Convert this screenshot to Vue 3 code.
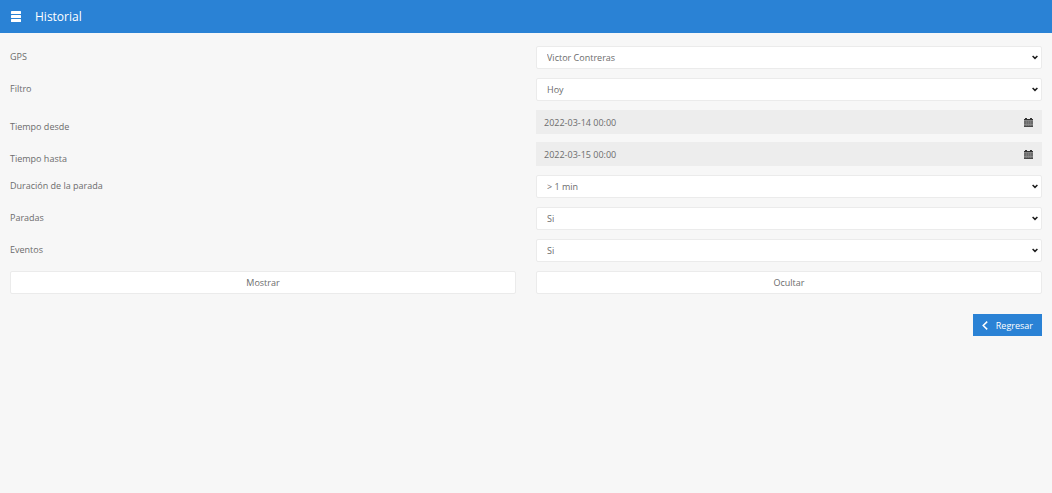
<script setup>
import { reactive } from 'vue'

const form = reactive({
  gps: 'Victor Contreras',
  filter: 'Hoy',
  from: '2022-03-14 00:00',
  to: '2022-03-15 00:00',
  duration: '> 1 min',
  stops: 'Si',
  events: 'Si'
})

const groups = [
  [
    { id: 'gps', label: 'GPS', options: ['Victor Contreras'] },
    { id: 'filter', label: 'Filtro', options: ['Hoy', 'Ayer'] }
  ],
  [
    { id: 'from', label: 'Tiempo desde', date: true },
    { id: 'to', label: 'Tiempo hasta', date: true }
  ],
  [
    { id: 'duration', label: 'Duración de la parada', options: ['> 1 min', '> 5 min'] },
    { id: 'stops', label: 'Paradas', options: ['Si', 'No'] },
    { id: 'events', label: 'Eventos', options: ['Si', 'No'] }
  ]
]
</script>

<template>
  <header class="bar">
    <button class="menu" type="button" aria-label="Menú">
      <svg width="10" height="11" viewBox="0 0 10 11" fill="#fff">
        <rect width="10" height="3" rx="0.5" />
        <rect y="4" width="10" height="3" rx="0.5" />
        <rect y="8" width="10" height="3" rx="0.5" />
      </svg>
    </button>
    <h1>Historial</h1>
  </header>
  <main>
    <form @submit.prevent>
      <div v-for="(group, i) in groups" :key="i" class="group">
        <div v-for="f in group" :key="f.id" class="row">
          <label :for="f.id" :class="{ low: f.date }">{{ f.label }}</label>
          <div v-if="f.date" class="date">
            <input :id="f.id" v-model="form[f.id]" type="text" readonly />
            <svg width="9" height="9" viewBox="0 0 9 9" aria-hidden="true">
              <path d="M0 1h1V0h2v1h3V0h2v1h1v8H0z" fill="#6c6c6c" />
              <path d="M0 1h1V0h2v1h3V0h2v1h1v1H0z" fill="#333" />
              <path d="M0 2.5h9M0 6.5h9" stroke="#999" stroke-width="0.6" />
              <path d="M2.5 3v5M4.5 3v5M6.5 3v5" stroke="#8c8c8c" stroke-width="0.5" />
              <path d="M0 8.5h9" stroke="#484848" />
            </svg>
          </div>
          <div v-else class="pick">
            <select :id="f.id" v-model="form[f.id]">
              <option v-for="o in f.options" :key="o">{{ o }}</option>
            </select>
            <svg width="6" height="5" viewBox="0 0 6 5" aria-hidden="true">
              <path d="M0.6 1L3 3.4L5.4 1" fill="none" stroke="#1c1c1c" stroke-width="1.5" />
            </svg>
          </div>
        </div>
      </div>
      <div class="row">
        <button class="plain" type="button">Mostrar</button>
        <button class="plain" type="button">Ocultar</button>
      </div>
    </form>
    <div class="footer">
      <button class="back" type="button">
        <svg width="6" height="9" viewBox="0 0 6 9" aria-hidden="true">
          <path d="M5.2 0.6L1.2 4.5L5.2 8.4" fill="none" stroke="#fff" stroke-width="1.5" />
        </svg>
        Regresar
      </button>
    </div>
  </main>
</template>

<style>
body {
  background: #f7f7f7;
}
</style>

<style scoped>
.bar,
main,
button,
input,
select {
  box-sizing: border-box;
  font-family: "Open Sans", "Noto Sans", sans-serif;
  font-size: 9px;
  color: #6c6c6c;
}
.bar {
  display: flex;
  align-items: center;
  gap: 14px;
  height: 33px;
  padding: 0 11px;
  background: #2a82d5;
}
.menu {
  display: flex;
  padding: 0;
  border: 0;
  background: none;
}
h1 {
  margin: 0;
  font-size: 12px;
  font-weight: 400;
  line-height: 32px;
  color: #fff;
}
main {
  padding: 13px 10px;
}
form {
  display: grid;
  gap: 9px;
}
.group {
  display: grid;
  gap: 9px;
}
.group:nth-child(2) {
  padding-bottom: 1px;
}
.row {
  display: grid;
  grid-template-columns: 1fr 1fr;
  column-gap: 20px;
  height: 23px;
}
label {
  line-height: 22px;
}
label.low {
  padding-top: 10px;
  line-height: 14px;
}
select,
.plain {
  width: 100%;
  height: 23px;
  border: 1px solid #ebebeb;
  border-radius: 2px;
  background: #fff;
}
.pick {
  position: relative;
}
.pick svg {
  position: absolute;
  top: 9px;
  right: 4px;
  pointer-events: none;
}
select {
  appearance: none;
  padding: 0 16px 0 10px;
}
.plain {
  padding: 0;
}
.date {
  display: flex;
  align-items: center;
  padding-right: 9px;
  background: #ededed;
}
.date input {
  flex: 1;
  min-width: 0;
  height: 23px;
  padding: 0 8px;
  border: 0;
  background: none;
}
.footer {
  display: flex;
  justify-content: flex-end;
  padding-top: 20px;
}
.back {
  display: flex;
  align-items: center;
  gap: 8px;
  height: 22px;
  padding: 0 9px;
  border: 0;
  background: #2a82d5;
  color: #fff;
}
</style>
